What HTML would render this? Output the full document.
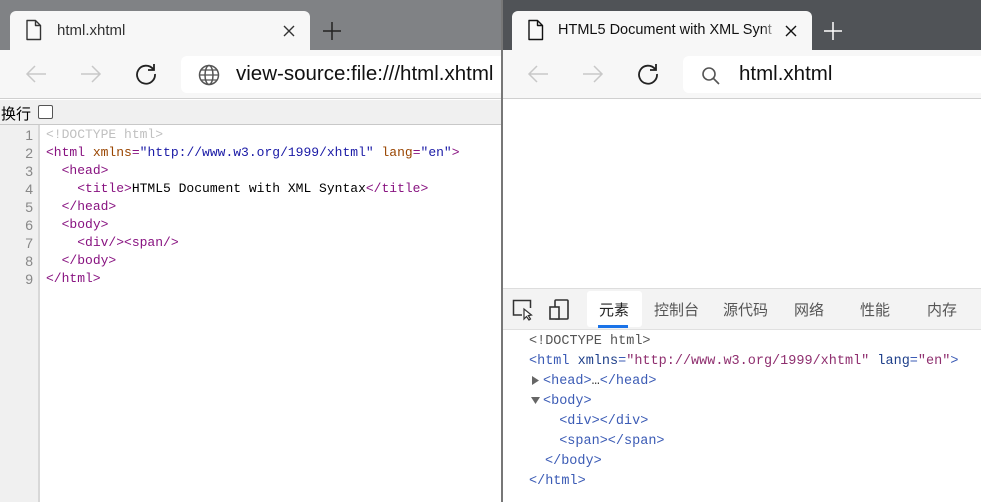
<!DOCTYPE html>
<html><head><meta charset="utf-8"><style>
*{margin:0;padding:0;box-sizing:border-box}
body{width:981px;height:502px;position:relative;overflow:hidden;background:#fff;font-family:"Liberation Sans","Noto Sans CJK SC",sans-serif}
.a{position:absolute}
.mono{font-family:"Liberation Mono","Noto Sans CJK SC",monospace;white-space:pre}
.t{color:#881280}.at{color:#994500}.v{color:#1a1aa6}.cm{color:#c0c0c0}
.rt{color:#3b5bb5}.ra{color:#1e3f8a}.rv{color:#8f2f6f}
</style></head><body>
<!-- left window -->
<div class="a" style="left:0;top:0;width:502px;height:50px;background:#808285"></div>
<div class="a" style="left:10px;top:11px;width:300px;height:40px;background:#f7f7f7;border-radius:6px 6px 0 0"></div>
<svg class="a" style="left:25px;top:19px" width="18" height="22" viewBox="0 0 18 22"><path d="M2 1.5h8.5l5 5V20.5H2z M10.5 1.5v5h5" fill="none" stroke="#333" stroke-width="1.4" stroke-linejoin="round"/></svg>
<div class="a" style="left:57px;top:22px;font-size:15px;color:#333">html.xhtml</div>
<svg class="a" style="left:283px;top:25px" width="12" height="12"><path d="M1 1L11 11M11 1L1 11" stroke="#333" stroke-width="1.4"/></svg>
<svg class="a" style="left:322px;top:21px" width="20" height="20"><path d="M10 1V19M1 10H19" stroke="#222" stroke-width="1.5"/></svg>
<div class="a" style="left:0;top:50px;width:502px;height:49px;background:#f7f7f7;border-bottom:1px solid #d0d0d0"></div>
<svg class="a" style="left:25px;top:64px" width="22" height="20"><path d="M21 10H2M10 2L2 10L10 18" fill="none" stroke="#c8c8c8" stroke-width="1.5"/></svg>
<svg class="a" style="left:80px;top:64px" width="22" height="20"><path d="M1 10H20M12 2L20 10L12 18" fill="none" stroke="#c8c8c8" stroke-width="1.5"/></svg>
<svg class="a" style="left:135px;top:63px" width="22" height="22"><path d="M18 6A9 9 0 1 0 20 11M19 1V7H13" fill="none" stroke="#222" stroke-width="1.8"/></svg>
<div class="a" style="left:181px;top:56px;width:321px;height:37px;background:#fff;border-radius:6px 0 0 6px"></div>
<svg class="a" style="left:198px;top:64px" width="22" height="22" viewBox="0 0 22 22"><circle cx="11" cy="11" r="9.5" fill="none" stroke="#555" stroke-width="1.5"/><ellipse cx="11" cy="11" rx="4" ry="9.5" fill="none" stroke="#555" stroke-width="1.5"/><path d="M1.5 11H20.5M3 6H19M3 16H19" stroke="#555" stroke-width="1.3"/></svg>
<div class="a" style="left:236px;top:62px;font-size:20.5px;color:#111;white-space:nowrap">view-source:file:///html.xhtml</div>
<div class="a" style="left:0;top:100px;width:502px;height:25px;background:#f0f0f0;border-bottom:1px solid #c8c8c8"></div>
<div class="a" style="left:1px;top:103px;font-size:15px;color:#000">换行</div>
<div class="a" style="left:38px;top:105px;width:15px;height:14px;border:1px solid #555;border-radius:2px;background:#fff"></div>
<div class="a" style="left:0;top:125px;width:40px;height:377px;background:#f0f0f0;border-right:2px solid #d8d8d8"></div>
<div class="a mono" style="left:0;top:126px;width:33px;text-align:right;font-size:14px;line-height:18px;color:#888;font-family:'Liberation Sans',sans-serif">1
2
3
4
5
6
7
8
9</div>
<div class="a mono" style="left:46px;top:126px;font-size:13px;line-height:18px;color:#000"><span class="cm">&lt;!DOCTYPE html&gt;</span>
<span class="t">&lt;html </span><span class="at">xmlns</span><span class="t">=</span><span class="v">"http://www.w3.org/1999/xhtml"</span><span class="t"> </span><span class="at">lang</span><span class="t">=</span><span class="v">"en"</span><span class="t">&gt;</span>
  <span class="t">&lt;head&gt;</span>
    <span class="t">&lt;title&gt;</span>HTML5 Document with XML Syntax<span class="t">&lt;/title&gt;</span>
  <span class="t">&lt;/head&gt;</span>
  <span class="t">&lt;body&gt;</span>
    <span class="t">&lt;div/&gt;&lt;span/&gt;</span>
  <span class="t">&lt;/body&gt;</span>
<span class="t">&lt;/html&gt;</span></div>
<!-- divider -->
<div class="a" style="left:501px;top:0;width:2px;height:502px;background:#777"></div>
<!-- right window -->
<div class="a" style="left:503px;top:0;width:478px;height:50px;background:#505357"></div>
<div class="a" style="left:512px;top:11px;width:300px;height:40px;background:#f7f7f7;border-radius:6px 6px 0 0"></div>
<svg class="a" style="left:527px;top:19px" width="18" height="22" viewBox="0 0 18 22"><path d="M2 1.5h8.5l5 5V20.5H2z M10.5 1.5v5h5" fill="none" stroke="#111" stroke-width="1.4" stroke-linejoin="round"/></svg>
<div class="a" style="left:558px;top:22px;width:218px;overflow:hidden;white-space:nowrap;font-size:14.5px;color:#111">HTML5 Document with XML Synt</div>
<div class="a" style="left:762px;top:18px;width:16px;height:26px;background:linear-gradient(to right,rgba(247,247,247,0),#f7f7f7)"></div>
<svg class="a" style="left:785px;top:25px" width="12" height="12"><path d="M1 1L11 11M11 1L1 11" stroke="#111" stroke-width="1.4"/></svg>
<svg class="a" style="left:823px;top:21px" width="20" height="20"><path d="M10 1V19M1 10H19" stroke="#fff" stroke-width="1.5"/></svg>
<div class="a" style="left:503px;top:50px;width:478px;height:49px;background:#f7f7f7;border-bottom:1px solid #d0d0d0"></div>
<svg class="a" style="left:527px;top:64px" width="22" height="20"><path d="M21 10H2M10 2L2 10L10 18" fill="none" stroke="#c8c8c8" stroke-width="1.5"/></svg>
<svg class="a" style="left:582px;top:64px" width="22" height="20"><path d="M1 10H20M12 2L20 10L12 18" fill="none" stroke="#c8c8c8" stroke-width="1.5"/></svg>
<svg class="a" style="left:637px;top:63px" width="22" height="22"><path d="M18 6A9 9 0 1 0 20 11M19 1V7H13" fill="none" stroke="#222" stroke-width="1.8"/></svg>
<div class="a" style="left:683px;top:56px;width:298px;height:37px;background:#fff;border-radius:6px 0 0 6px"></div>
<svg class="a" style="left:701px;top:66px" width="20" height="20"><circle cx="8" cy="8" r="6" fill="none" stroke="#555" stroke-width="1.6"/><path d="M12.5 12.5L18 18" stroke="#555" stroke-width="1.6"/></svg>
<div class="a" style="left:739px;top:62px;font-size:20.5px;color:#111">html.xhtml</div>
<!-- devtools -->
<div class="a" style="left:503px;top:288px;width:478px;height:42px;background:#f3f3f3;border-top:1px solid #ddd;border-bottom:1px solid #e0e0e0"></div>
<svg class="a" style="left:512px;top:299px" width="22" height="22"><path d="M10 16H1.5V1.5H18.5V9" fill="none" stroke="#333" stroke-width="1.5"/><path d="M12 10L12 20L14.5 17.5L17 21L18.5 20L16.3 16.6L19.5 16Z" fill="#fff" stroke="#333" stroke-width="1.2"/></svg>
<svg class="a" style="left:549px;top:299px" width="22" height="22"><rect x="6" y="1" width="13" height="19" rx="1" fill="none" stroke="#333" stroke-width="1.6"/><rect x="1" y="8" width="9" height="12" fill="#f3f3f3" stroke="#333" stroke-width="1.6"/></svg>
<div class="a" style="left:587px;top:291px;width:55px;height:36px;background:#fff;border-radius:3px"></div>
<div class="a" style="left:598px;top:325px;width:30px;height:3px;background:#1a73e8"></div>
<div class="a" style="left:599px;top:299px;font-size:15px;color:#222;white-space:nowrap">元素</div>
<div class="a" style="left:654px;top:299px;font-size:15px;color:#555;white-space:nowrap">控制台</div>
<div class="a" style="left:723px;top:299px;font-size:15px;color:#555;white-space:nowrap">源代码</div>
<div class="a" style="left:794px;top:299px;font-size:15px;color:#555;white-space:nowrap">网络</div>
<div class="a" style="left:860px;top:299px;font-size:15px;color:#555;white-space:nowrap">性能</div>
<div class="a" style="left:927px;top:299px;font-size:15px;color:#555;white-space:nowrap">内存</div>
<svg class="a" style="left:531px;top:375px" width="9" height="11"><path d="M1 1L8 5.5L1 10Z" fill="#666"/></svg>
<svg class="a" style="left:530px;top:396px" width="11" height="9"><path d="M1 1L10 1L5.5 8Z" fill="#666"/></svg>
<div class="a mono" style="left:529px;top:332px;font-size:13.5px;line-height:20px;color:#333"><span style="color:#555">&lt;!DOCTYPE html&gt;</span>
<span class="rt">&lt;html </span><span class="ra">xmlns</span><span class="rt">=</span><span class="rv">"http://www.w3.org/1999/xhtml"</span> <span class="ra">lang</span><span class="rt">=</span><span class="rv">"en"</span><span class="rt">&gt;</span></div>
<div class="a mono" style="left:543px;top:372px;font-size:13.5px;line-height:20px;color:#333"><span class="rt">&lt;head&gt;</span>…<span class="rt">&lt;/head&gt;</span>
<span class="rt">&lt;body&gt;</span>
  <span class="rt">&lt;div&gt;&lt;/div&gt;</span>
  <span class="rt">&lt;span&gt;&lt;/span&gt;</span></div>
<div class="a mono" style="left:545px;top:452px;font-size:13.5px;line-height:20px"><span class="rt">&lt;/body&gt;</span></div>
<div class="a mono" style="left:529px;top:472px;font-size:13.5px;line-height:20px"><span class="rt">&lt;/html&gt;</span></div>
</body></html>
